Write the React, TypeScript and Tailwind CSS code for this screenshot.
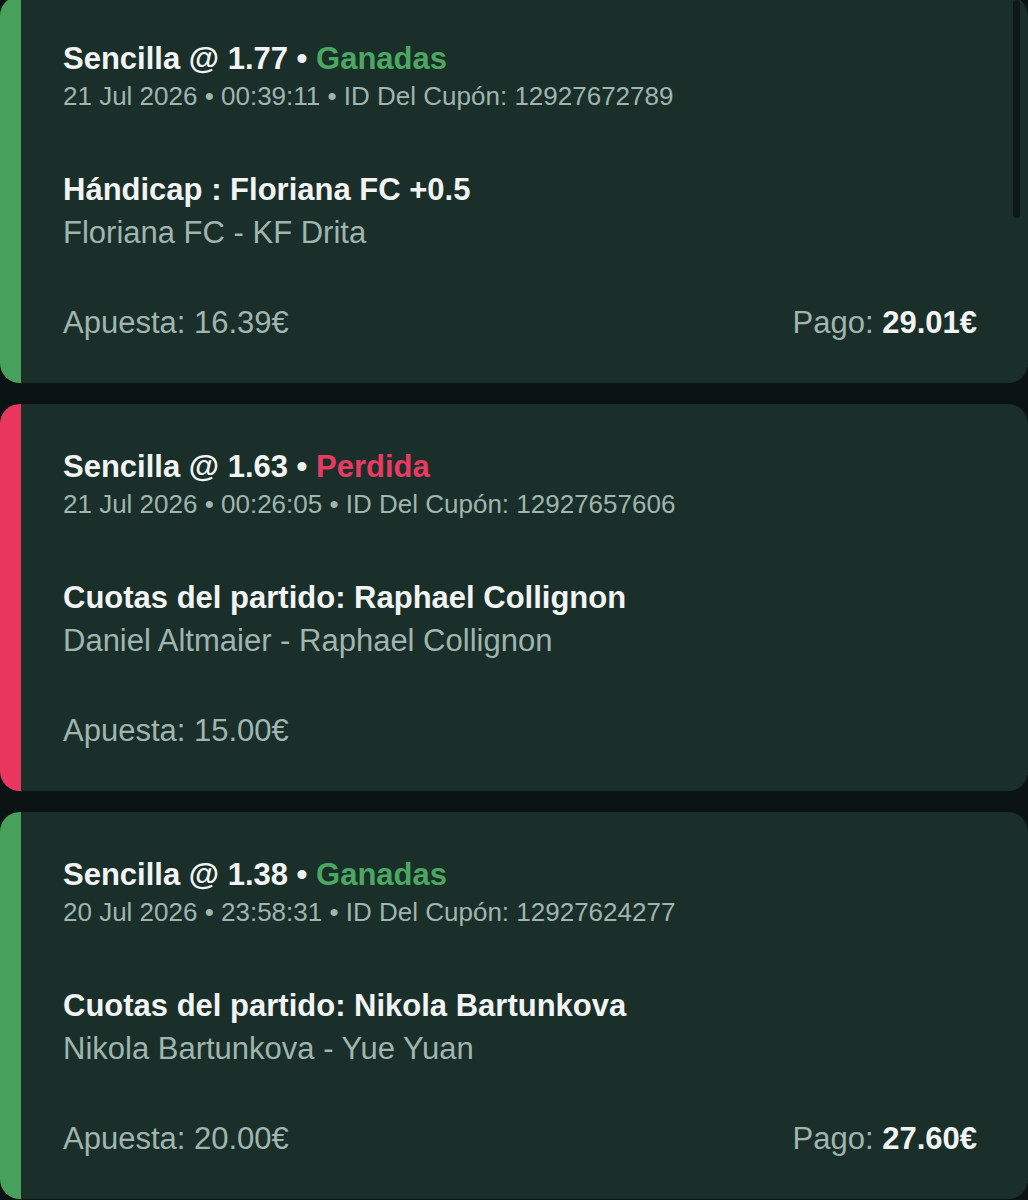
type Bet = {
  odds: string;
  status: 'won' | 'lost';
  date: string;
  time: string;
  coupon: string;
  market: string;
  match: string;
  stake: string;
  payout?: string;
};

const bets: Bet[] = [
  {
    odds: '1.77',
    status: 'won',
    date: '21 Jul 2026',
    time: '00:39:11',
    coupon: '12927672789',
    market: 'Hándicap : Floriana FC +0.5',
    match: 'Floriana FC - KF Drita',
    stake: '16.39€',
    payout: '29.01€',
  },
  {
    odds: '1.63',
    status: 'lost',
    date: '21 Jul 2026',
    time: '00:26:05',
    coupon: '12927657606',
    market: 'Cuotas del partido: Raphael Collignon',
    match: 'Daniel Altmaier - Raphael Collignon',
    stake: '15.00€',
  },
  {
    odds: '1.38',
    status: 'won',
    date: '20 Jul 2026',
    time: '23:58:31',
    coupon: '12927624277',
    market: 'Cuotas del partido: Nikola Bartunkova',
    match: 'Nikola Bartunkova - Yue Yuan',
    stake: '20.00€',
    payout: '27.60€',
  },
];

function BetCard({ bet }: { bet: Bet }) {
  const won = bet.status === 'won';
  return (
    <div className="flex h-[387px] overflow-hidden rounded-[20px] bg-[#1a2f2a]">
      <div className={won ? 'w-[21px] shrink-0 bg-[#47a15a]' : 'w-[21px] shrink-0 bg-[#e8365f]'} />
      <div className="flex flex-1 flex-col pl-[42px] pr-[51px] pt-[45px]">
        <div className="text-[31px] font-bold leading-[36px] text-[#f1f4f3]">
          Sencilla @ {bet.odds} •{' '}
          <span className={won ? 'text-[#4aa860]' : 'text-[#e83a62]'}>{won ? 'Ganadas' : 'Perdida'}</span>
        </div>
        <div className="mt-[3px] text-[26px] leading-[32px] text-[#9fb5ae]">
          {bet.date} • {bet.time} • ID Del Cupón: {bet.coupon}
        </div>

        <div className="mt-[56px] text-[31px] font-bold leading-[43px] text-[#f1f4f3]">{bet.market}</div>
        <div className="text-[31px] leading-[43px] text-[#9fb5ae]">{bet.match}</div>

        <div className="mt-[47px] flex items-center justify-between text-[31px] leading-[43px]">
          <span className="text-[#9fb5ae]">Apuesta: {bet.stake}</span>
          {bet.payout && (
            <span className="text-[#9fb5ae]">
              Pago: <span className="font-bold text-[#f1f4f3]">{bet.payout}</span>
            </span>
          )}
        </div>
      </div>
    </div>
  );
}

export default function App() {
  return (
    <div
      className="relative h-[1200px] overflow-hidden bg-[#0b1315]"
      style={{ fontFamily: '"Liberation Sans", Arial, sans-serif' }}
    >
      <div className="-mt-[4px] flex flex-col gap-[21px]">
        {bets.map((bet) => (
          <BetCard key={bet.coupon} bet={bet} />
        ))}
      </div>
      <div className="absolute right-[8px] top-0 h-[218px] w-[7px] rounded-full bg-[#0e1816]" />
    </div>
  );
}
